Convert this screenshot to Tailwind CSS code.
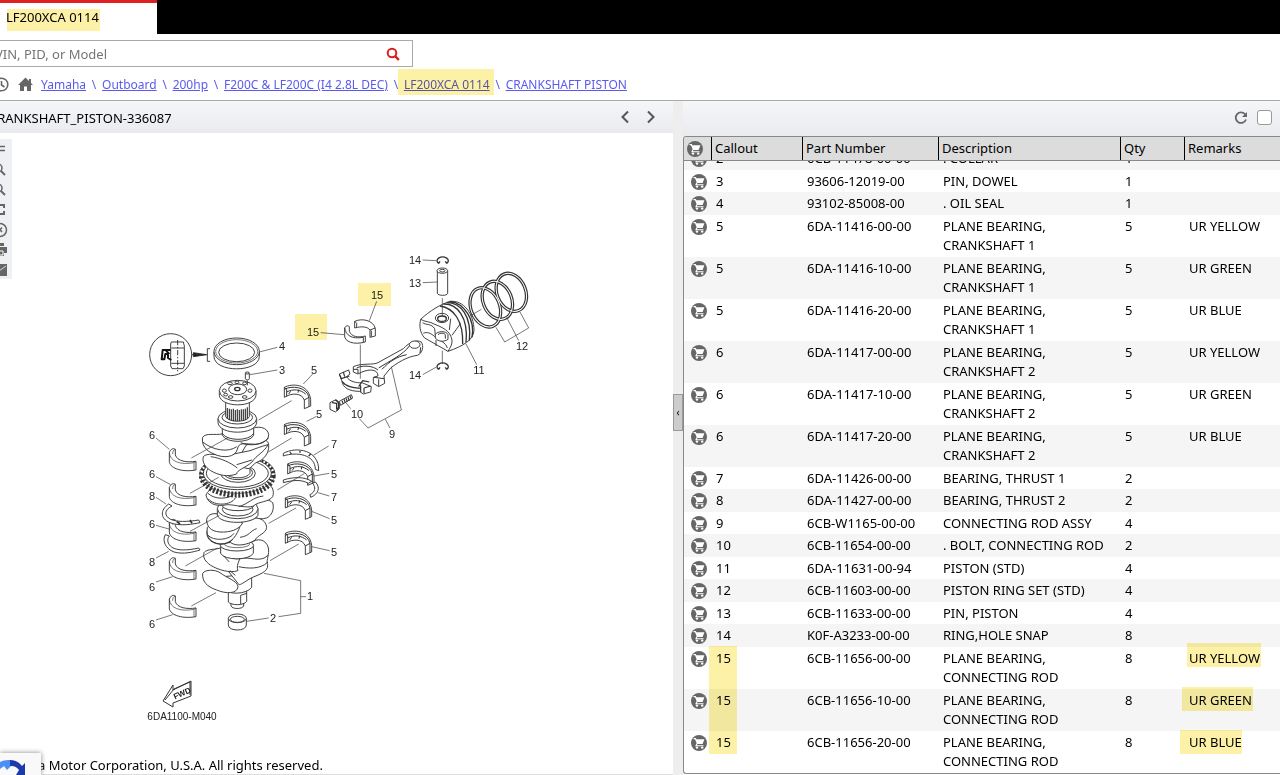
<!DOCTYPE html>
<html lang="en">
<head>
  <meta charset="UTF-8" />
  <meta name="viewport" content="width=device-width, initial-scale=1.0" />
  <title>LF200XCA 0114 - CRANKSHAFT PISTON</title>
  <script src="https://cdn.jsdelivr.net/npm/@tailwindcss/browser@4"></script>
</head>
<body class="h-screen flex flex-col overflow-hidden bg-white text-black text-[13px] font-['Noto_Sans','Open_Sans',sans-serif]">
  <!-- shared symbols -->
  <svg class="hidden">
    <symbol id="cart" viewBox="0 0 16 16">
      <circle cx="8" cy="8" r="8" fill="#666" />
      <path d="M2.500 3h2.300l.6 1.200h8L11.600 9H6L4 4.200H2.500z" fill="#fff" />
      <path d="M6 8.500L5 10.700h7.500" fill="none" stroke="#fff" stroke-width="1.1" />
      <circle cx="6" cy="12.600" r="1.200" fill="#fff" /><circle cx="11.200" cy="12.600" r="1.200" fill="#fff" />
    </symbol>
  </svg>

  <header class="flex h-[34px] shrink-0 bg-black">
    <div class="relative w-[157px] bg-white border-t-3 border-[#e02020] pl-[6px] pt-1 leading-5">
      LF200XCA 0114
      <span class="absolute left-[7px] top-[6px] w-[93px] h-[22px] bg-[#fcf1a6] mix-blend-multiply"></span>
    </div>
  </header>

  <div class="shrink-0 border-b border-[#aaa] h-[67px]">
    <form class="relative -ml-3 mt-[6px] w-[425px]">
      <input type="text" aria-label="Search" placeholder="VIN, PID, or Model" class="block w-full h-[27px] border border-[#aaa] pl-[6px] pr-10 placeholder:text-[#757575] outline-none" />
      <button type="button" aria-label="Search" class="absolute right-3 top-[6px]">
        <svg class="size-4" viewBox="0 0 16 16" fill="none" stroke="#d91e1e"><circle cx="7" cy="7" r="4.3" stroke-width="2" /><path d="M10.2 10.2l3.6 3.8" stroke-width="2.4" /></svg>
      </button>
    </form>
    <nav class="flex items-center mt-2 h-5 text-xs text-[#5a5af0] whitespace-nowrap">
      <svg class="-ml-[6px] -mt-[2px] size-[15px] shrink-0" viewBox="0 0 15 15" fill="none" stroke="#666" stroke-width="1.6"><circle cx="7.5" cy="7.5" r="6.3" /><path d="M7.5 4v4l3 2" /></svg>
      <svg class="ml-[9px] -mt-[2px] mr-2 size-[15px] shrink-0" viewBox="0 0 15 15" fill="#666"><path d="M7.500 0.500L11 4V2h2v4l2 2h-2v6H9V9.500H6V14H2V8H0z" /></svg>
      <a href="#" class="underline">Yamaha</a><span class="w-4 text-center">\</span>
      <a href="#" class="underline">Outboard</a><span class="w-4 text-center">\</span>
      <a href="#" class="underline">200hp</a><span class="w-4 text-center">\</span>
      <a href="#" class="underline">F200C &amp; LF200C (I4 2.8L DEC)</a><span class="w-4 text-center">\</span>
      <span class="relative"><a href="#" class="underline">LF200XCA 0114</a><span class="absolute -left-[6px] -right-1 -top-2 h-[26px] bg-[#fcf1a6] mix-blend-multiply"></span></span><span class="w-4 text-center">\</span>
      <a href="#" class="underline">CRANKSHAFT PISTON</a>
    </nav>
  </div>

  <main class="flex flex-1 min-h-0">
    <!-- diagram side -->
    <section class="relative flex-[673] min-w-0 flex flex-col overflow-hidden">
      <div class="flex items-center justify-between h-8 shrink-0 bg-linear-to-b from-[#f5f6f8] to-[#eaebef]">
        <h1 class="-ml-[11px] pt-1">CRANKSHAFT_PISTON-336087</h1>
        <div class="flex gap-[11px] pr-[15px]">
          <button type="button" aria-label="Previous"><svg class="w-[15px] h-4 block" viewBox="0 0 15 16" fill="none" stroke="#555" stroke-width="2"><path d="M11 2.500L5.500 8l5.500 5.500" /></svg></button>
          <button type="button" aria-label="Next"><svg class="w-[15px] h-4 block" viewBox="0 0 15 16" fill="none" stroke="#555" stroke-width="2"><path d="M5 2.500L10.500 8 5 13.500" /></svg></button>
        </div>
      </div>

      <div class="flex-1 min-h-0 overflow-hidden">
        <svg class="block w-full" viewBox="0 133 673 622" fill="#fff" stroke="#333" stroke-linejoin="round">
          <defs>
            <g id="shell5">
              <path d="M433 202C455 190 505 190 512 238V258L493 266V240C485 218 455 218 433 232Z" />
              <path d="M433 208C455 196 500 200 507 232L493 240M440 216C460 206 480 208 497 222M446 222l6-8M476 209l-2 9M433 202l7 6v22M507 232v28" fill="none" stroke-width="3" />
            </g>
            <g id="shell6">
              <path d="M88 398C92 386 100 384 106 388V405C112 424 140 428 168 424V450C120 458 88 442 88 424Z" />
              <path d="M88 398C90 424 120 436 162 428M106 388c-6 2-8 6-8 14M162 428v22M162 428l6-4" fill="none" stroke-width="2" />
            </g>
          </defs>

          <!-- crankshaft, drawn bottom to top -->
          <g transform="translate(140 320) scale(.33333)" stroke-width="2.800">
            <path d="M265 895v20c0 20 54 20 54 0v-20" /><ellipse cx="292" cy="895" rx="27" ry="13" /><ellipse cx="292" cy="898" rx="21" ry="9" />
            <path d="M273 850v8c4 10 34 10 38 0v-8z" /><path d="M265 812v34c8 10 46 12 55-2v-30z" /><path d="M302 826l18-6M302 826v26" />
            <path d="M250 770v34c10 22 70 20 85-2v-40z" />
            <path d="M240 690C262 672 310 680 340 664C360 652 384 664 386 690C386 712 378 722 383 734C386 758 352 764 330 776C310 788 296 800 294 790L262 750Z" />
            <path d="M192 698C200 686 225 690 240 684C250 702 270 720 300 716C292 730 290 745 294 752C270 760 235 750 212 736C196 724 188 714 192 698Z" />
            <path d="M188 760C196 748 225 748 240 758C260 774 292 782 294 800C292 822 258 822 230 810C200 800 186 784 188 760Z" />
            <path d="M300 716C330 708 360 730 384 706M296 740C320 745 360 750 384 726M240 696l28 30M270 752l16 14" fill="none" />
            <path d="M242 676v24c10 22 86 22 98 0v-24" /><ellipse cx="291" cy="676" rx="50" ry="17" /><ellipse cx="291" cy="672" rx="38" ry="11" stroke-width="2" />

            <path d="M202 630C210 610 230 618 250 612L330 596C362 588 378 604 380 622C378 642 350 646 346 660C320 676 290 680 272 668L214 664C202 656 198 642 202 630Z" />
            <path d="M202 622C215 605 240 616 270 604L300 620C290 644 278 672 240 672C210 668 198 650 202 622Z" />
            <path d="M202 644C220 666 270 660 282 640M300 652c30-4 30-20 50-26M214 664c20 14 54 10 64-6" fill="none" />
            <path d="M200 606C204 586 222 580 240 584L330 600C352 596 352 580 336 580L250 570" />
            <path d="M330 576C342 536 380 532 398 548C404 566 396 594 370 596C350 598 342 590 330 576Z" />
            <path d="M200 598C204 580 225 578 240 584C260 604 290 600 308 608C300 628 270 638 240 636C212 634 200 620 200 598Z" />
            <path d="M232 566v20c10 28 106 28 122 0v-20" /><ellipse cx="293" cy="566" rx="61" ry="30" /><ellipse cx="293" cy="568" rx="46" ry="20" />
            <path d="M248 560c12 16 80 16 92 0v-20h-92z" />
            <path d="M198 525C208 500 232 506 262 510L370 490C398 490 404 514 398 530C384 548 360 542 340 558C322 566 286 554 262 554C224 562 202 548 198 525Z" />
            <path d="M204 536c20 24 70 20 82-2M204 520c20 20 60 18 80 2M296 560c30-8 40-28 74-32" fill="none" />

            <!-- gear -->
            <ellipse cx="292" cy="468" rx="106" ry="56" stroke-width="18" stroke-dasharray="6 5" />
            <ellipse cx="292" cy="462" rx="113" ry="58" fill="none" stroke-width="2" />
            <ellipse cx="292" cy="460" rx="102" ry="49" /><ellipse cx="292" cy="460" rx="93" ry="42" />
            <ellipse cx="294" cy="460" rx="52" ry="27" /><ellipse cx="294" cy="458" rx="44" ry="21" />
            <path d="M256 440v20c12 18 64 18 74 0v-24" />

            <path d="M318 376C350 360 386 350 386 376C388 400 370 420 352 426C336 434 336 444 324 446L284 436Z" />
            <path d="M190 410C200 398 230 404 252 408L330 392C348 386 360 380 384 374C372 398 350 404 336 426C316 444 290 450 290 462C262 472 236 466 212 452C194 440 186 426 190 410Z" />
            <path d="M188 352C196 338 226 346 246 342L330 330C352 314 384 322 386 344C386 364 360 376 334 372C312 372 296 366 292 388C286 412 250 416 222 402C196 392 184 374 188 352Z" />
            <path d="M188 366C220 392 266 398 290 380M212 410c30 4 60 18 80 34M302 368c24 10 60 10 84-14M290 434l46-14" fill="none" />
            <path d="M247 326v20c12 24 82 24 94 0v-20z" /><path d="M247 340c12 24 82 24 94 0" fill="none" />
            <path d="M234 296v12c4 38 112 38 116 0v-12" /><ellipse cx="292" cy="296" rx="58" ry="28" /><ellipse cx="292" cy="292" rx="46" ry="20" />
            <path d="M257 240v50c8 18 64 18 71 0v-50z" />
            <path d="M262 264v32M268 266v34M274 268v34M280 266v38M286 270v34M292 268v36M298 270v34M304 268v34M310 268v34M316 266v34M322 262v34" stroke-width="3.500" />
            <path d="M238 212v14c4 38 106 38 110 0v-14" /><ellipse cx="293" cy="212" rx="55" ry="31" />
            <ellipse cx="293" cy="208" rx="27" ry="16" /><ellipse cx="292" cy="207" rx="8" ry="5" stroke-width="4" />
            <g><ellipse cx="270" cy="190" rx="7" ry="4" /><ellipse cx="291" cy="187" rx="6" ry="4" /><ellipse cx="314" cy="190" rx="6" ry="4" /><ellipse cx="253" cy="212" rx="6" ry="5" /><ellipse cx="257" cy="224" rx="6" ry="4" /><ellipse cx="272" cy="231" rx="7" ry="4" /><ellipse cx="314" cy="231" rx="7" ry="4" /><ellipse cx="330" cy="212" rx="6" ry="5" /></g>
            <path d="M316 160v16c0 5 12 5 12 0v-16z" /><ellipse cx="322" cy="159" rx="6" ry="3" /><path d="M322 182v14" />

            <!-- oil seal and its section -->
            <path d="M222 95v14c0 50 136 50 136 0V95" /><ellipse cx="290" cy="94" rx="68" ry="40" /><ellipse cx="290" cy="94" rx="63" ry="35" stroke-width="2" /><ellipse cx="290" cy="97" rx="54" ry="28" />
            <circle cx="92" cy="104" r="63" /><path d="M94 66h36l3 12v60l-4 8H96l-4-8V72zM94 84h38M94 130h38" /><path d="M113 60v94" stroke-dasharray="16 5 4 5" />
            <path d="M92 90H68l-3 28h8l3-16h8v12l10 6M78 92l10 10" fill="none" stroke="#111" stroke-width="6" /><path d="M155 104h45M160 98l40 6-40 6z" fill="#111" /><path d="M210 86h-8v38h8" fill="none" />

            <!-- bearings -->
            <use href="#shell5" /><use href="#shell5" y="112" />
            <path d="M430 400C470 378 538 390 536 452L526 448C526 404 470 394 430 408Z" /><path d="M450 396l4 6M480 392v6M512 402l-6 6" stroke-width="4" />
            <use href="#shell5" x="10" y="230" />
            <path d="M430 480C460 470 495 470 515 484L505 490C484 478 460 480 430 488Z" /><path d="M526 486C542 502 536 522 512 532L510 524C526 516 528 502 518 490Z" />
            <use href="#shell5" x="3" y="332" /><use href="#shell5" x="3" y="438" />
            <use href="#shell6" /><use href="#shell6" y="105" /><use href="#shell6" y="212" /><use href="#shell6" y="327" /><use href="#shell6" y="440" />
            <path d="M86 552C60 570 60 596 90 608C120 620 160 612 180 608L176 600C140 606 110 606 92 598C72 588 72 570 96 558Z" /><path d="M110 604l10 8M150 600l6 10" stroke-width="5" />
            <path d="M76 644C66 662 76 686 102 696C130 704 160 696 180 690L176 684C140 692 112 692 96 682C82 672 80 658 88 648Z" />

            <g fill="none" stroke-width="2">
              <path d="M358 96l54-14M330 164l82-14M490 192l28-30M455 242L356 300M500 304l28-14M455 354l-70 42M520 406l46-28M522 468l46-8M534 518l34 10M412 510l82-50M515 574l54 22M386 610l82-46M515 680l54 12M390 722l86-50" />
              <path d="M48 354l40 34M48 470l44 24M154 414l112-62M150 520l86-48M48 532l30 20M48 616l42 12M150 634l88-48M48 714l38-20M136 738l96-54M48 786l50-16M48 900l50-16M154 858l74-40" />
              <path d="M372 760l110 22v98l-66 10M482 830h16M320 904l66-10" />
            </g>
          </g>

          <!-- piston and rod -->
          <g transform="translate(290 240) scale(.33333)" stroke-width="2.800">
            <path d="M446 70a17 11 0 1 1 24 0M446 70l4-6M470 70l-4-6" fill="none" stroke-width="4" />
            <path d="M446 388a17 11 0 1 1 24 0M446 388l4-6M470 388l-4-6" fill="none" stroke-width="4" />
            <path d="M442 92v68c2 8 30 8 31 0V92z" /><ellipse cx="457" cy="92" rx="16" ry="8" /><ellipse cx="457" cy="92" rx="8" ry="4" />
            <g fill="none" stroke-width="10"><ellipse cx="664" cy="157" rx="43" ry="59" transform="rotate(-22 664 157)" /><ellipse cx="622" cy="181" rx="43" ry="59" transform="rotate(-22 622 181)" /><ellipse cx="586" cy="202" rx="43" ry="61" transform="rotate(-22 586 202)" /></g>
            <g fill="none" stroke="#fff" stroke-width="3"><ellipse cx="664" cy="157" rx="43" ry="59" transform="rotate(-22 664 157)" /><ellipse cx="622" cy="181" rx="43" ry="59" transform="rotate(-22 622 181)" /><ellipse cx="586" cy="202" rx="43" ry="61" transform="rotate(-22 586 202)" /></g>
            <path d="M392 238C420 212 450 194 480 184C520 180 552 220 552 272C550 300 520 318 474 334L404 294C388 276 388 256 392 238Z" />
            <path d="M460 192C500 190 536 230 528 308M470 187C512 188 546 228 538 302M480 184C524 190 556 240 546 292M450 198C490 204 520 240 518 312" fill="none" stroke-width="4" />
            <path d="M392 238C404 246 420 244 432 252C456 262 480 270 486 300C488 312 480 324 474 334M398 248c10 8 26 2 36 18l2 20M400 280c10-6 26 0 38 14 14 10 28 12 34 30M438 300v18M482 236l-4 34M512 250l-26 36" fill="none" />
            <ellipse cx="456" cy="234" rx="20" ry="14" /><ellipse cx="456" cy="236" rx="13" ry="8" stroke-width="4" /><path d="M436 284c6-12 34-12 38 0v14c-10 8-30 8-38-4z" /><path d="M444 284c6-6 18-6 22 0v12" />
            <path d="M457 174v54M457 332v40" fill="none" stroke-width="2" />
            <path d="M194 244C216 234 250 240 256 266V288L240 292V270C232 260 216 258 194 264Z" /><path d="M194 244l6 6v12M240 270l16-6M244 272v18" fill="none" />
            <path d="M164 264C168 256 174 256 178 260V274C184 290 204 294 226 288V306C190 316 164 304 164 288Z" /><path d="M164 264c4 22 20 34 56 28M220 292v14" fill="none" />

            <path d="M190 380C216 368 250 376 264 368L340 326C358 306 380 298 394 306C402 318 398 340 382 346C350 350 320 370 302 384L282 408L284 430L266 440L250 430V412L264 408C264 388 240 386 216 396L204 402L190 396Z" />
            <ellipse cx="374" cy="314" rx="16" ry="11" /><path d="M358 318C340 344 300 362 266 384M350 344C320 350 296 366 276 388M392 322l-2 18M200 384c20-10 50-6 64 6M252 412l30 4M266 418v20M190 388h14v12" fill="none" stroke-width="3" />
            <path d="M148 402L176 390L180 402L170 410C176 424 200 430 216 428L244 440L242 456L220 462L208 454C180 454 158 444 156 424Z" /><path d="M148 402l6 14 24-8M156 424c10 14 34 22 56 20M212 436v20M222 444v16M222 444l20-6M160 396l4 14M206 440l12-18 20 4" fill="none" stroke-width="3.500" />
            <path d="M148 484l36-20 4 10-36 22z" /><path d="M156 482l4 10M162 478l4 10M168 475l4 10M174 472l4 10M180 468l4 10" stroke-width="3.500" />
            <path d="M120 488l16-8 12 8v18l-12 10-16-8z" /><path d="M126 488l14 2v18M136 480c10 2 16 20 4 32" fill="none" stroke-width="4" />
            <path d="M211 314v102" stroke-width="2" />
            <g fill="none" stroke-width="2"><path d="M398 60l40 2M398 128l44-2M260 184l-22 58M92 278l70 6M398 404l40-22M528 312l32 62M540 228l34-20M618 262l26 44 72-42-26-48M650 232l36 70M166 486l16 20M208 536l26 28 100-54-30-130M286 538l14 26" /></g>
          </g>

          <!-- direction arrow -->
          <path d="M163 701l10-16v5l18-9v15l-18 7v4z" /><path d="M165 700l9-11 16-7v13" fill="none" />
          <g stroke="none" fill="#222" class="font-['Liberation_Sans',Arial,sans-serif] text-[11px]" text-anchor="middle">
            <text x="182" y="696" class="text-[8px] font-bold" transform="rotate(-24 182 693)">FWD</text>
            <text x="182" y="720" class="text-[10px]">6DA1100-M040</text>
            <text x="282" y="350">4</text><text x="282" y="374">3</text><text x="314" y="374">5</text><text x="319" y="418">5</text><text x="334" y="448">7</text><text x="334" y="478">5</text><text x="334" y="501">7</text><text x="334" y="524">5</text><text x="334" y="556">5</text>
            <text x="152" y="439">6</text><text x="152" y="478">6</text><text x="152" y="500">8</text><text x="152" y="528">6</text><text x="152" y="566">8</text><text x="152" y="591">6</text><text x="152" y="628">6</text>
            <text x="310" y="600">1</text><text x="273" y="622">2</text><text x="392" y="438">9</text><text x="357" y="418">10</text><text x="479" y="374">11</text><text x="522" y="350">12</text><text x="415" y="287">13</text><text x="415" y="264">14</text><text x="415" y="379">14</text><text x="377" y="299">15</text><text x="313" y="336">15</text>
          </g>
          <g fill="#fcf1a6" stroke="none" class="mix-blend-multiply"><path d="M358 283h33v23h-33zM295 314h32v26h-32z" /></g>
        </svg>
      </div>

      <!-- diagram tools -->
      <div class="absolute left-0 top-[38px] w-3 overflow-hidden bg-[#eff0f3]">
        <svg class="block w-3 h-[140px]" viewBox="0 0 12 140" fill="none" stroke="#666" stroke-width="1.500">
          <path d="M0 7.500h5M0 11.500h5" /><circle cx="-2" cy="29" r="4" /><path d="M1 32l4 4" stroke-width="2" /><circle cx="-2" cy="49" r="4" /><path d="M1 52l4 4" stroke-width="2" />
          <path d="M0 66h4v3M0 75h4v-3" stroke-width="2" /><circle cx="0" cy="91" r="6.500" /><path d="M-2 88.500l4 4.500M2 88.500l-4 4.500" />
          <path d="M0 104h4v3H0zM0 108h7v6H4v3H0z" fill="#666" stroke="none" /><path d="M0 112h3v4H0" stroke="#fff" stroke-width="1" /><path d="M0 125h7v12H0z" fill="#666" stroke="none" /><path d="M-1 132l7-5" stroke="#ddd" stroke-width="1" />
        </svg>
      </div>

      <footer class="h-[19px] shrink-0 border-b border-[#ddd] leading-[18px] whitespace-nowrap pl-[38px]">a Motor Corporation, U.S.A. All rights reserved.</footer>
      <div class="absolute left-0 bottom-0 w-[41px] h-[22px] overflow-hidden bg-[#f9f9f9] shadow-[0_0_5px_#888]">
        <svg class="block w-[41px] h-[22px]" viewBox="0 0 41 22"><path d="M0 9C4 7 8 7 11 7v7l-5 6-6 1z" fill="#4a90f5" /><path d="M10 7c5 0 9 2 12 6l3-3v12H16l3-5c-3-4-6-4-9-4z" fill="#1c3aa9" /><path d="M0 16l4-3 3 4 4-4 3 4 2 1-3 4H0z" fill="#f9f9f9" /></svg>
      </div>
    </section>

    <button type="button" aria-label="Collapse" class="w-[10px] shrink-0 bg-[#eee] flex items-center"><span class="mt-[-52px] flex h-[37px] w-[10px] items-center justify-center border border-[#999] bg-[#ccc] text-[10px]">‹</span></button>

    <!-- parts list -->
    <section class="flex-[597] min-w-0 flex flex-col">
      <div class="flex items-center justify-end gap-2 h-[35px] shrink-0 pr-2 pb-[2px] bg-linear-to-b from-[#f5f6f8] to-[#eaebef]">
        <button type="button" aria-label="Refresh"><svg class="block size-4" viewBox="0 0 16 16" fill="none" stroke="#666" stroke-width="1.800"><path d="M12.300 4.500A5.300 5.300 0 1 0 13 9.500" /><path d="M14 2v5H9z" fill="#666" stroke="none" /></svg></button>
        <input type="checkbox" aria-label="Select all" class="appearance-none size-[15px] bg-white border border-[#999] rounded-[3px]" />
      </div>
      <!-- reversed column, so the list opens scrolled to its end -->
      <div class="flex flex-col-reverse flex-1 min-h-0 overflow-hidden mb-px border border-r-0 border-[#888] rounded-l-[3px]">
        <table class="w-full shrink-0 h-[calc(100%+14px)] table-fixed border-separate border-spacing-0 leading-[19px] text-left">
          <colgroup><col class="w-[27px]" /><col class="w-[91px]" /><col class="w-[136px]" /><col class="w-[182px]" /><col class="w-[64px]" /><col /></colgroup>
          <thead class="sticky top-0 z-10">
            <tr class="h-6 bg-[#dcdcdc] *:border-b *:border-[#888] *:font-normal *:p-0 *:pl-[3px]">
              <th><svg class="size-4" role="img" aria-label="Cart"><use href="#cart" /></svg></th>
              <th><span class="block border-l border-black -ml-[3px] pl-[3px] leading-[23px]">Callout</span></th>
              <th><span class="block border-l border-black -ml-[3px] pl-[3px] leading-[23px]">Part Number</span></th>
              <th><span class="block border-l border-black -ml-[3px] pl-[3px] leading-[23px]">Description</span></th>
              <th><span class="block border-l border-black -ml-[3px] pl-[3px] leading-[23px]">Qty</span></th>
              <th><span class="block border-l border-black -ml-[3px] pl-[3px] leading-[23px]">Remarks</span></th>
            </tr>
          </thead>
          <tbody id="parts"></tbody>
        </table>
      </div>
    </section>
  </main>

<script>
  const parts = [
    ['2', '6CB-11478-00-00', '. COLLAR', 1, ''],
    ['3', '93606-12019-00', 'PIN, DOWEL', 1, ''],
    ['4', '93102-85008-00', '. OIL SEAL', 1, ''],
    ['5', '6DA-11416-00-00', 'PLANE BEARING,<br>CRANKSHAFT 1', 5, 'UR YELLOW'],
    ['5', '6DA-11416-10-00', 'PLANE BEARING,<br>CRANKSHAFT 1', 5, 'UR GREEN'],
    ['5', '6DA-11416-20-00', 'PLANE BEARING,<br>CRANKSHAFT 1', 5, 'UR BLUE'],
    ['6', '6DA-11417-00-00', 'PLANE BEARING,<br>CRANKSHAFT 2', 5, 'UR YELLOW'],
    ['6', '6DA-11417-10-00', 'PLANE BEARING,<br>CRANKSHAFT 2', 5, 'UR GREEN'],
    ['6', '6DA-11417-20-00', 'PLANE BEARING,<br>CRANKSHAFT 2', 5, 'UR BLUE'],
    ['7', '6DA-11426-00-00', 'BEARING, THRUST 1', 2, ''],
    ['8', '6DA-11427-00-00', 'BEARING, THRUST 2', 2, ''],
    ['9', '6CB-W1165-00-00', 'CONNECTING ROD ASSY', 4, ''],
    ['10', '6CB-11654-00-00', '. BOLT, CONNECTING ROD', 2, ''],
    ['11', '6DA-11631-00-94', 'PISTON (STD)', 4, ''],
    ['12', '6CB-11603-00-00', 'PISTON RING SET (STD)', 4, ''],
    ['13', '6CB-11633-00-00', 'PIN, PISTON', 4, ''],
    ['14', 'K0F-A3233-00-00', 'RING,HOLE SNAP', 8, ''],
    ['15', '6CB-11656-00-00', 'PLANE BEARING,<br>CONNECTING ROD', 8, 'UR YELLOW'],
    ['15', '6CB-11656-10-00', 'PLANE BEARING,<br>CONNECTING ROD', 8, 'UR GREEN'],
    ['15', '6CB-11656-20-00', 'PLANE BEARING,<br>CONNECTING ROD', 8, 'UR BLUE'],
  ];

  // marker strokes over the rows that matter
  const marks = {
    'UR YELLOW': '<span class="absolute -left-[2px] -top-[6px] w-[74px] h-6 bg-[#fcf1a6] mix-blend-multiply"></span>',
    'UR GREEN': '<span class="absolute -left-[7px] -top-[4px] w-[71px] h-6 bg-[#fcf1a6] mix-blend-multiply"></span>',
    'UR BLUE': '<span class="absolute -left-[9px] -top-[3px] w-[62px] h-6 bg-[#fcf1a6] mix-blend-multiply"></span>',
  };
  const calloutMark = '<span class="absolute -left-[2px] -top-px w-[28px] h-[108px] bg-[#fcf1a6] mix-blend-multiply"></span>';

  document.getElementById('parts').innerHTML = parts.map(([callout, number, description, qty, remarks]) => `
    <tr class="align-top odd:bg-[#f5f5f5] *:p-0 *:pt-[2px] *:pb-px *:pl-[5px]">
      <td><svg class="ml-[2px] mt-[2px] size-4 -mb-1" role="img" aria-label="Add to cart"><use href="#cart" /></svg></td>
      <td class="relative">${callout}${callout === '15' && remarks === 'UR YELLOW' ? calloutMark : ''}</td>
      <td>${number}</td>
      <td class="whitespace-nowrap">${description}</td>
      <td>${qty}</td>
      <td><span class="relative">${remarks}${callout === '15' ? marks[remarks] : ''}</span></td>
    </tr>`).join('');
</script>
</body>
</html>
